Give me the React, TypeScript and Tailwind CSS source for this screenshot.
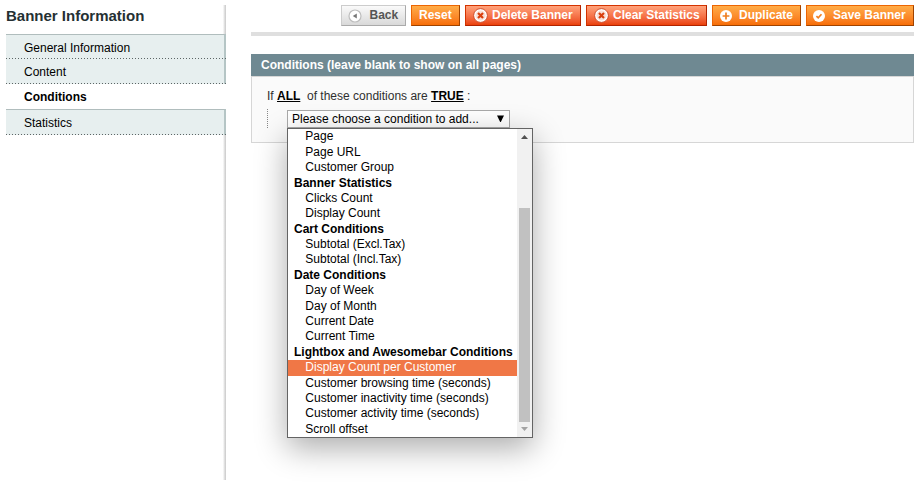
import React from "react";

type Tone = "gray" | "orange" | "red";

const tones: Record<Tone, string> = {
  gray: "border-t-[#cccccc] border-l-[#cccccc] border-r-[#aaaaaa] border-b-[#aaaaaa] bg-linear-to-b from-[#fafafa] to-[#d9d9d9] text-[#555555]",
  orange: "border-t-[#ed6502] border-l-[#ed6502] border-r-[#a04300] border-b-[#a04300] bg-linear-to-b from-[#ffac47] to-[#f76e05] text-white",
  red: "border-t-[#d43300] border-l-[#d43300] border-r-[#b02300] border-b-[#b02300] bg-linear-to-b from-[#ffa27a] to-[#ea4005] text-white",
};

function BackIcon() {
  return (
    <svg width="14" height="14" viewBox="0 0 14 14" className="block">
      <circle cx="7" cy="7" r="6" fill="#fff" stroke="#bdbdbd" strokeWidth="1.2" />
      <path d="M8.8 4.4v5.2L4.8 7z" fill="#777" />
    </svg>
  );
}

function CrossIcon() {
  return (
    <svg width="15" height="15" viewBox="0 0 15 15" className="block">
      <circle cx="7.5" cy="7.5" r="6.9" fill="#fff" stroke="#cf4a25" strokeWidth="1" />
      <circle cx="7.5" cy="7.5" r="5.1" fill="#fae0d7" />
      <path d="M5 5l5 5M10 5l-5 5" stroke="#d9400f" strokeWidth="2.2" />
    </svg>
  );
}

function PlusIcon() {
  return (
    <svg width="12" height="12" viewBox="0 0 12 12" className="block">
      <circle cx="6" cy="6" r="6" fill="#fff" />
      <path d="M6 2.6v6.8M2.6 6h6.8" stroke="#ef7f22" strokeWidth="1.7" />
    </svg>
  );
}

function CheckIcon() {
  return (
    <svg width="12" height="12" viewBox="0 0 12 12" className="block">
      <circle cx="6" cy="6" r="6" fill="#fff" />
      <path d="M3.4 6.2l1.8 1.7 3.3-3.6" fill="none" stroke="#ef7f22" strokeWidth="1.7" />
    </svg>
  );
}

function Button({ tone, size, icon, label }: { tone: Tone; size: string; icon?: React.ReactNode; label: string }) {
  return (
    <button className={`flex h-[21px] items-center border text-[12px] leading-[18px] font-bold ${size} ${tones[tone]}`}>
      {icon && <span className="shrink-0">{icon}</span>}
      <span className="-mt-px whitespace-nowrap">{label}</span>
    </button>
  );
}

const options: { label: string; kind?: "group" | "active" }[] = [
  { label: "Page" },
  { label: "Page URL" },
  { label: "Customer Group" },
  { label: "Banner Statistics", kind: "group" },
  { label: "Clicks Count" },
  { label: "Display Count" },
  { label: "Cart Conditions", kind: "group" },
  { label: "Subtotal (Excl.Tax)" },
  { label: "Subtotal (Incl.Tax)" },
  { label: "Date Conditions", kind: "group" },
  { label: "Day of Week" },
  { label: "Day of Month" },
  { label: "Current Date" },
  { label: "Current Time" },
  { label: "Lightbox and Awesomebar Conditions", kind: "group" },
  { label: "Display Count per Customer", kind: "active" },
  { label: "Customer browsing time (seconds)" },
  { label: "Customer inactivity time (seconds)" },
  { label: "Customer activity time (seconds)" },
  { label: "Scroll offset" },
];

function optionStyle(kind?: "group" | "active") {
  if (kind === "group") return "pl-[6px] font-bold";
  if (kind === "active") return "pl-[17.3px] bg-[#f07746] text-white";
  return "pl-[17.3px]";
}

function Dropdown() {
  return (
    <div className="absolute top-[18px] left-0 z-10 flex h-[310px] w-[246px] border border-[#646464] bg-white text-black shadow-[0_10px_30px_rgba(0,0,0,0.33)]">
      <ul className="flex-1 pt-[0.35px]">
        {options.map((o) => (
          <li key={o.label} className={`h-[15.4px] leading-[15.4px] whitespace-nowrap ${optionStyle(o.kind)}`}>
            {o.label}
          </li>
        ))}
      </ul>
      <div className="flex w-[15px] flex-col items-center bg-[#f1f1f1]">
        <svg width="7" height="4" viewBox="0 0 7 4" className="mt-[6px] block">
          <path d="M0 4L3.5 0 7 4z" fill="#505050" />
        </svg>
        <div className="mt-[69px] h-[214px] w-[11px] bg-[#c1c1c1]" />
        <svg width="7" height="4" viewBox="0 0 7 4" className="mt-[5px] block">
          <path d="M0 0h7L3.5 4z" fill="#a3a3a3" />
        </svg>
      </div>
    </div>
  );
}

const dots =
  "bg-[repeating-linear-gradient(90deg,#5d6666_0_1px,transparent_1px_3px)]";

function Tab({ label, size, top }: { label: string; size: string; top?: boolean }) {
  return (
    <li className={`flex flex-col border-r-2 border-r-[#b5c5c5] bg-[#e7efef] ${top ? "border-t border-t-[#b0bdbd]" : ""} ${size}`}>
      <span className="flex flex-1 items-center pt-[2px] pl-[18px]">{label}</span>
      <span className={`-mr-[2px] h-px ${dots}`} />
    </li>
  );
}

export default function App() {
  return (
    <div className="flex h-[483px] w-[918px] overflow-hidden bg-white font-['Liberation_Sans',Arial,sans-serif] text-[12px] text-[#2f2f2f]">
      <aside className="mt-[5px] ml-[6px] h-[475px] w-[220px] shrink-0 bg-linear-to-r from-transparent from-[217px] via-[#e8e8e8] via-[218px] to-[#c9c9c9]">
        <h3 className="h-[29px] text-[15px] leading-[21px] font-bold text-[#253033]">Banner Information</h3>
        <ul className="text-black">
          <Tab label="General Information" size="h-[25px]" top />
          <Tab label="Content" size="h-[25px]" />
          <li className="flex h-[25px] items-center bg-white pl-[18px] font-bold">Conditions</li>
          <Tab label="Statistics" size="h-[26px]" top />
        </ul>
      </aside>

      <main className="mt-[5px] ml-[25px] w-[663px]">
        <div className="flex justify-end gap-[5px]">
          <Button tone="gray" size="w-[65px] pl-[6px] gap-[7.5px]" icon={<BackIcon />} label="Back" />
          <Button tone="orange" size="w-[49px] pl-[7px]" label="Reset" />
          <Button tone="red" size="w-[116px] pl-[7px] gap-[4px]" icon={<CrossIcon />} label="Delete Banner" />
          <Button tone="red" size="w-[121px] pl-[7px] gap-[4px]" icon={<CrossIcon />} label="Clear Statistics" />
          <Button tone="orange" size="w-[89px] pl-[7px] gap-[7px]" icon={<PlusIcon />} label="Duplicate" />
          <Button tone="orange" size="w-[108px] pl-[6px] gap-[8px]" icon={<CheckIcon />} label="Save Banner" />
        </div>
        <div className="mt-[6px] h-[4px] bg-[#dfdfdf]" />

        <h4 className="mt-[18px] h-[22px] bg-[#6f8992] pl-[10px] leading-[22px] font-bold text-white">
          Conditions (leave blank to show on all pages)
        </h4>
        <section className="h-[67px] border border-[#d6d6d6] bg-[#fafafa] pt-[11px] pl-[15px]">
          <p className="h-[16px] leading-[16px] whitespace-pre">
            If <b className="text-black underline">ALL</b>
            {"  of these conditions are "}
            <b className="text-black underline">TRUE</b> :
          </p>
          <div className="mt-[5px] flex h-[19px]">
            <div className="w-px bg-[repeating-linear-gradient(180deg,#888_0_1px,transparent_1px_2px)]" />
            <div className="relative mt-px ml-[19px] h-[18px] w-[223px]">
              <div className="flex h-full items-center justify-between border border-[#a9a9a9] bg-white pr-[5px] pl-[4px] text-black">
                <span className="leading-[16px]">Please choose a condition to add...</span>
                <svg width="7" height="7" viewBox="0 0 7 7" className="-mt-px block">
                  <path d="M0 .5h7L3.8 7h-.6z" fill="#000" />
                </svg>
              </div>
              <Dropdown />
            </div>
          </div>
        </section>
      </main>
    </div>
  );
}
